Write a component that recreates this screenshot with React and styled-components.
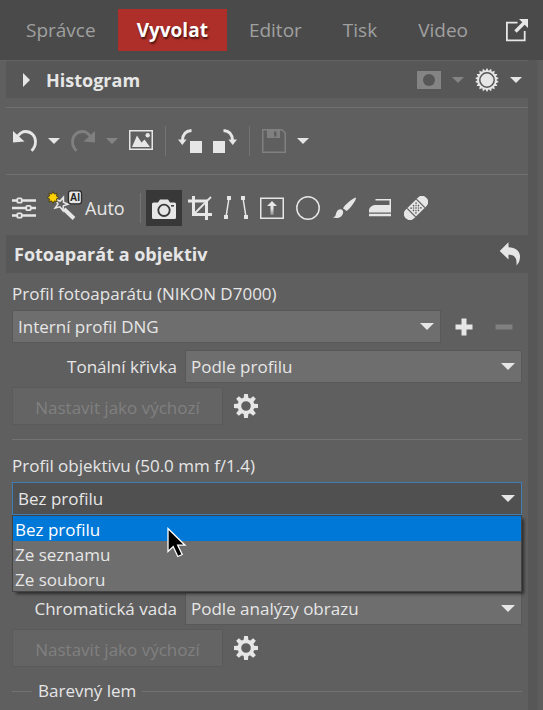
import React from "react";
import styled, { createGlobalStyle } from "styled-components";

const ink = "#e6e6e6";
const faint = "#848484";
const panel = "#5f5f5f";

const GlobalStyle = createGlobalStyle`
  * { box-sizing: border-box; }
  body {
    margin: 0;
    background: ${panel};
    color: ${ink};
    font-family: "Open Sans", "Noto Sans", sans-serif;
    font-size: 17px;
    line-height: 24px;
  }
  button, select { font: inherit; color: inherit; }
  button { border: 0; padding: 0; background: none; }
  svg { display: block; flex: none; }
`;

const Page = styled.div`
  position: relative;
  min-height: 100vh;
  display: flex;
  flex-direction: column;
`;

const TopBar = styled.header`
  height: 60px;
  padding: 0 14px 0 7px;
  display: flex;
  align-items: center;
  justify-content: space-between;
  background: #4a4a4a;
`;

const Tabs = styled.nav`
  display: flex;
  gap: 3px;
`;

const Tab = styled.button`
  height: 42px;
  padding: 0 19px;
  font-size: 19px;
  font-weight: ${(p) => (p.$active ? 700 : 400)};
  color: ${(p) => (p.$active ? "#fff" : "#a0a0a0")};
  background: ${(p) => (p.$active ? "#ae2f29" : "transparent")};
  text-shadow: ${(p) => (p.$active ? "1px 2px 2px rgba(0,0,0,.6)" : "none")};
`;

const Columns = styled.div`
  flex: 1;
  display: grid;
  grid-template-columns: minmax(0, 1fr) 15px;
`;

const Panel = styled.main`
  padding-left: 6px;
  border-top: 1px solid #646464;
`;

const ScrollTrack = styled.div`
  background: linear-gradient(90deg, #575757 0 8px, #5d5d5d 11px);
`;

const SectionBar = styled.section`
  height: ${(p) => p.$height}px;
  display: flex;
  align-items: center;
  gap: 11px;
  padding: 0 6px 0 ${(p) => p.$indent}px;
  background: #575757;
`;

const Title = styled.h2`
  flex: 1;
  margin: 0;
  font-size: 18px;
  line-height: 24px;
  font-weight: 700;
`;

const Disclosure = styled.button`
  width: 18px;
  height: 24px;
  display: grid;
  place-items: center;
`;

const Toolbar = styled.div`
  height: 67px;
  padding-left: 7px;
  display: flex;
  align-items: center;
  gap: 11px;
  border-top: 1px solid #707070;
`;

const ToolbarTop = styled(Toolbar)`
  margin-top: 9px;
`;

const ModeBar = styled(Toolbar)`
  height: 61px;
  padding: 5px 0 0;
  gap: 0;
`;

const IconButton = styled.button`
  display: grid;
  place-items: center;
  color: ${(p) => (p.disabled ? "#808080" : ink)};
`;

const ModeButton = styled(IconButton)`
  width: 36px;
  height: 36px;
  background: ${(p) => (p.$active ? "#383838" : "transparent")};
`;

const AutoButton = styled.button`
  display: flex;
  align-items: center;
  gap: 2px;
  margin: 0 14px 0 5px;
  font-size: 18px;
`;

const Divider = styled.span`
  width: 1px;
  height: 30px;
  margin: 0 ${(p) => p.$after || 1}px 0 1px;
  background: #737373;
`;

const Form = styled.div`
  padding: 0 6px;
`;

const FieldLabel = styled.label`
  display: block;
  padding-top: ${(p) => p.$top}px;
  height: ${(p) => p.$top + 28}px;
`;

const Row = styled.div`
  display: flex;
  align-items: center;
  gap: 11px;
  margin-bottom: ${(p) => p.$bottom}px;
`;

const ProfileActions = styled.div`
  display: flex;
  gap: 16px;
  padding-right: 6px;
`;

const CurveRow = styled.div`
  display: grid;
  grid-template-columns: 165px minmax(0, 1fr);
  gap: 8px;
  align-items: center;
  margin-bottom: 4px;
  & > label { text-align: right; }
`;

const SelectBox = styled.span`
  flex: 1;
  display: grid;
  align-items: center;
  & > * { grid-area: 1 / 1; }
  & > svg { justify-self: end; margin-right: 7px; pointer-events: none; }
`;

const Select = styled.select`
  appearance: none;
  width: 100%;
  height: 33px;
  padding: 0 24px 0 5px;
  border: 1px solid ${(p) => (p.$open ? "#3f7db5" : "#585858")};
  border-radius: 0;
  outline: 0;
  background: ${(p) => (p.$open ? "#505050" : "#6e6e6e")};
`;

const Options = styled.ul`
  position: relative;
  margin: 0;
  padding: 0;
  list-style: none;
  border: 1px solid #434343;
  background: #6e6e6e;
  box-shadow: 3px 3px 3px -1px rgba(0, 0, 0, 0.55);
`;

const Option = styled.li`
  height: 25px;
  line-height: 27px;
  padding-left: 2px;
  background: ${(p) => (p.$active ? "#0078d7" : "transparent")};
  color: ${(p) => (p.$active ? "#fff" : ink)};
`;

const DefaultButton = styled.button`
  width: 211px;
  height: 38px;
  padding-top: 4px;
  border: 1px solid #5a5a5a;
  background: #646464;
  color: #808080;
`;

const Rule = styled.hr`
  width: 100%;
  height: 1px;
  margin: 0;
  border: 0;
  background: #737373;
`;

const Legend = styled.div`
  display: grid;
  grid-template-columns: 20px auto 1fr;
  gap: 6px;
  align-items: center;
  padding-top: 4px;
`;

const Pointer = styled.svg`
  position: absolute;
  left: 167px;
  top: 527px;
`;

function Icon({ w = 24, h = 24, children }) {
  return (
    <svg width={w} height={h} viewBox={`0 0 ${w} ${h}`} fill="none" stroke="currentColor" strokeWidth="1.5" aria-hidden="true">
      {children}
    </svg>
  );
}

function Caret({ w = 12, h = 6, color = "currentColor" }) {
  return (
    <svg width={w} height={h} viewBox="0 0 12 6" preserveAspectRatio="none" aria-hidden="true">
      <path d="M0 0H12L6 6Z" fill={color} />
    </svg>
  );
}

function star(cx, cy, teeth, outer, inner) {
  const points = [];
  for (let i = 0; i < teeth * 2; i += 1) {
    const r = i % 2 ? inner : outer;
    const a = (i * Math.PI) / teeth - Math.PI / 2;
    points.push(`${(cx + r * Math.cos(a)).toFixed(2)},${(cy + r * Math.sin(a)).toFixed(2)}`);
  }
  return points.join(" ");
}

const UndoShape = () => (
  <>
    <path d="M4.5 7.5C7 4 9.500 2.500 12.500 2.500C18.500 2.500 22.500 7 22.500 12.500C22.500 16.500 21 19.500 18.500 21.700" strokeWidth="2.800" />
    <path d="M0 2L0 13.500L11.500 12.500Z" fill="currentColor" stroke="none" />
  </>
);

const RotateShape = () => (
  <>
    <path d="M12 12H24V24H12Z" fill="currentColor" stroke="none" />
    <path d="M13.500 1.500C8 1.800 4.500 5.500 4.300 12" strokeWidth="2.800" />
    <path d="M0 10.500H8.600L4.300 16Z" fill="currentColor" stroke="none" />
  </>
);

const Mirror = ({ children }) => <g transform="matrix(-1 0 0 1 24 0)">{children}</g>;

const Gear = () => (
  <Icon>
    {[0, 45, 90, 135, 180, 225, 270, 315].map((a) => (
      <path key={a} d="M9.500 5.500L10.100 0H13.900L14.500 5.500Z" fill="currentColor" stroke="none" transform={`rotate(${a} 12 12)`} />
    ))}
    <circle cx="12" cy="12" r="6.600" strokeWidth="3.600" />
  </Icon>
);

const modes = [
  {
    label: "Fotoaparát a objektiv",
    active: true,
    art: (
      <>
        <path d="M1.500 6.500H6L8 3.500H16L18 6.500H22.500Q24 6.500 24 8V21.500Q24 23 22.500 23H1.500Q0 23 0 21.500V8Q0 6.500 1.500 6.500Z" fill="currentColor" stroke="none" />
        <circle cx="12" cy="14.300" r="5.700" stroke="#383838" strokeWidth="1.800" />
        <path d="M19 9.800H22" stroke="#383838" />
      </>
    ),
  },
  {
    label: "Oříznout",
    art: (
      <>
        <path d="M5.500 0V18.500H24M0 5H18.500V24" strokeWidth="3" />
        <path d="M6 18L23 1" strokeWidth="1.800" />
      </>
    ),
  },
  {
    label: "Perspektiva",
    art: (
      <>
        <path d="M5 2L2 21M19 2L22 21" />
        <path d="M3 0H7V4H3ZM0 19H4V23H0ZM17 0H21V4H17ZM20 19H24V23H20Z" fill="currentColor" stroke="none" />
      </>
    ),
  },
  {
    label: "Přechodový filtr",
    art: (
      <>
        <defs>
          <linearGradient id="arrowFade" x1="0" y1="5" x2="0" y2="20" gradientUnits="userSpaceOnUse">
            <stop offset=".5" stopColor={ink} />
            <stop offset="1" stopColor={ink} stopOpacity=".2" />
          </linearGradient>
        </defs>
        <path d="M.75 2.250H23.250V22.250H.75Z" />
        <path d="M12 5L17 10H13.500V19H10.500V10H7Z" fill="url(#arrowFade)" stroke="none" />
      </>
    ),
  },
  { label: "Kruhový filtr", art: <circle cx="12" cy="12" r="11.200" /> },
  {
    label: "Štětec",
    art: (
      <g fill="currentColor" stroke="none">
        <path d="M24 1.500C24.200 4.500 18 13 14.500 15L11 12.200C13 8.500 20.500 2.500 24 1.500Z" />
        <path d="M9.500 13.500C11.500 14.500 12 17.500 9.500 20C7.500 22.200 4 22.500 .8 21.300C3.500 20.800 3.500 19.500 4.200 17C5 14 7.500 12.700 9.500 13.500Z" />
      </g>
    ),
  },
  {
    label: "Žehlička",
    art: (
      <g fill="currentColor" stroke="none">
        <path d="M7.500 3H23V16.500H1V14.500C1 11 4.500 9 8.500 9H21.500V4.500H7.500ZM1 17.800H23V20.200H1Z" />
      </g>
    ),
  },
  {
    label: "Retušovat",
    art: (
      <g transform="rotate(-45 12 12)">
        <rect x="-2.500" y="6" width="29" height="12" rx="5.500" fill="currentColor" stroke="none" />
        <path d="M5.500 6V18M18.500 6V18" stroke={panel} strokeWidth="1.300" />
        <g fill={panel} stroke="none">
          {[8.500, 12, 15.500].map((x) => [8.600, 12, 15.400].map((y) => <circle key={`${x}-${y}`} cx={x} cy={y} r=".85" />))}
          {[10.250, 13.750].map((x) => [10.300, 13.700].map((y) => <circle key={`${x}-${y}`} cx={x} cy={y} r=".75" />))}
        </g>
      </g>
    ),
  },
];

function Picker({ id, value, open, options = [value] }) {
  return (
    <SelectBox>
      <Select id={id} defaultValue={value} $open={open}>
        {options.map((o) => (
          <option key={o}>{o}</option>
        ))}
      </Select>
      <Caret w={14} h={7} color={ink} />
    </SelectBox>
  );
}

const DefaultRow = ({ bottom }) => (
  <Row $bottom={bottom}>
    <DefaultButton disabled>Nastavit jako výchozí</DefaultButton>
    <IconButton aria-label="Možnosti">
      <Gear />
    </IconButton>
  </Row>
);

const lensOptions = ["Bez profilu", "Ze seznamu", "Ze souboru"];

export default function App() {
  return (
    <Page>
      <GlobalStyle />
      <TopBar>
        <Tabs>
          {["Správce", "Vyvolat", "Editor", "Tisk", "Video"].map((t) => (
            <Tab key={t} $active={t === "Vyvolat"}>
              {t}
            </Tab>
          ))}
        </Tabs>
        <IconButton aria-label="Nové okno">
          <Icon>
            <path d="M12.500 4.700H1.900V22.300H19.700V13" strokeWidth="1.800" />
            <path d="M10.500 13.500L19 5" strokeWidth="3.400" />
            <path d="M14 1H23V10Z" fill="currentColor" stroke="none" />
          </Icon>
        </IconButton>
      </TopBar>
      <Columns>
        <Panel>
          <SectionBar $height={37} $indent={11}>
            <Disclosure aria-label="Rozbalit histogram">
              <svg width="7" height="14" viewBox="0 0 7 14">
                <path d="M0 0L7 7L0 14Z" fill={ink} />
              </svg>
            </Disclosure>
            <Title>Histogram</Title>
            <IconButton disabled aria-label="Maska">
              <Icon h={18}>
                <path d="M0 0H24V18H0Z" fill={faint} stroke="none" />
                <circle cx="12" cy="9" r="6" fill="#575757" stroke="none" />
              </Icon>
            </IconButton>
            <Caret color={faint} />
            <IconButton aria-label="Expozice">
              <Icon>
                <polygon points={star(12, 12, 18, 12, 9.500)} fill="currentColor" stroke="none" />
                <circle cx="12" cy="12" r="7.200" stroke="#575757" strokeWidth="1.500" />
              </Icon>
            </IconButton>
            <Caret />
          </SectionBar>
          <ToolbarTop>
            <IconButton aria-label="Zpět">
              <Icon><UndoShape /></Icon>
            </IconButton>
            <Caret />
            <IconButton disabled aria-label="Znovu">
              <Icon><Mirror><UndoShape /></Mirror></Icon>
            </IconButton>
            <Caret color={faint} />
            <IconButton aria-label="Náhled">
              <Icon>
                <path d="M.75 1.750H23.250V20.250H.75Z" />
                <path d="M3 18L8 6.500L12.500 13.500L15.500 10.500L21 18Z" fill="currentColor" stroke="none" />
                <circle cx="18.700" cy="6.300" r="2.200" fill="currentColor" stroke="none" />
              </Icon>
            </IconButton>
            <Divider />
            <IconButton aria-label="Otočit vlevo">
              <Icon><RotateShape /></Icon>
            </IconButton>
            <IconButton aria-label="Otočit vpravo">
              <Icon><Mirror><RotateShape /></Mirror></Icon>
            </IconButton>
            <Divider />
            <IconButton disabled aria-label="Uložit">
              <Icon>
                <path d="M.75 .75H20L23.250 4V23.250H.75Z" />
                <path d="M5 1H18V9H5ZM12 2.500V7.500H14.500V2.500Z" fill="currentColor" fillRule="evenodd" stroke="none" />
              </Icon>
            </IconButton>
            <Caret />
          </ToolbarTop>
          <ModeBar>
            <ModeButton aria-label="Úpravy">
              <Icon>
                <path d="M0 4.500H24M0 12H24M0 19.500H24" strokeWidth="2.400" />
                <g fill={panel} strokeWidth="1.800">
                  <rect x="5.300" y="2.300" width="4.400" height="4.400" rx="1" />
                  <rect x="14.300" y="9.800" width="4.400" height="4.400" rx="1" />
                  <rect x="5.300" y="17.300" width="4.400" height="4.400" rx="1" />
                </g>
              </Icon>
            </ModeButton>
            <AutoButton>
              <Icon w={36} h={36}>
                <path d="M17 19L27 28.500" strokeWidth="4" />
                <polygon points={star(14, 14, 5, 7, 3)} fill={panel} strokeWidth="1.600" transform="rotate(20 14 14)" />
                <polygon points={star(6, 7.500, 8, 6, 3.700)} fill="#ffd000" stroke="#4c4318" strokeWidth="1" />
                <rect x="21.500" y=".8" width="13" height="13" rx="2.500" fill={ink} stroke="#2c2c2c" strokeWidth="1.300" />
                <text x="28" y="11" textAnchor="middle" fontFamily="Liberation Sans, sans-serif" fontWeight="700" fontSize="10" fill="#222" stroke="none">AI</text>
              </Icon>
              Auto
            </AutoButton>
            <Divider $after={5} />
            {modes.map((m) => (
              <ModeButton key={m.label} aria-label={m.label} $active={m.active}>
                <Icon>{m.art}</Icon>
              </ModeButton>
            ))}
          </ModeBar>
          <SectionBar $height={38} $indent={8}>
            <Title>Fotoaparát a objektiv</Title>
            <IconButton aria-label="Obnovit">
              <Icon>
                <path d="M1.700 9L10.500 .3V5.200C17.500 5.500 22 9 22 14.500C22 18 21 21 18.500 23.500C19 16.500 17.500 13 10.500 12.800V17.500Z" fill="currentColor" stroke="none" />
              </Icon>
            </IconButton>
          </SectionBar>
          <Form>
            <FieldLabel htmlFor="camera" $top={9}>Profil fotoaparátu (NIKON D7000)</FieldLabel>
            <Row $bottom={7}>
              <Picker id="camera" value="Interní profil DNG" />
              <ProfileActions>
                <IconButton aria-label="Přidat profil">
                  <Icon><path d="M12 3.500V20.500M3.500 12H20.500" strokeWidth="5" /></Icon>
                </IconButton>
                <IconButton disabled aria-label="Odebrat profil">
                  <Icon><path d="M3.500 12H20.500" strokeWidth="5" /></Icon>
                </IconButton>
              </ProfileActions>
            </Row>
            <CurveRow>
              <label htmlFor="curve">Tonální křivka</label>
              <Picker id="curve" value="Podle profilu" />
            </CurveRow>
            <DefaultRow bottom={14} />
            <Rule />
            <FieldLabel htmlFor="lens" $top={14}>Profil objektivu (50.0 mm f/1.4)</FieldLabel>
            <Picker id="lens" value="Bez profilu" options={lensOptions} open />
            <Options role="listbox" aria-label="Profil objektivu">
              {lensOptions.map((o, i) => (
                <Option key={o} role="option" aria-selected={i === 0} $active={i === 0}>
                  {o}
                </Option>
              ))}
            </Options>
            <CurveRow>
              <label htmlFor="aberration">Chromatická vada</label>
              <Picker id="aberration" value="Podle analýzy obrazu" />
            </CurveRow>
            <DefaultRow bottom={8} />
            <Legend>
              <Rule />
              <span>Barevný lem</span>
              <Rule />
            </Legend>
          </Form>
        </Panel>
        <ScrollTrack />
      </Columns>
      <Pointer width="20" height="32" viewBox="0 0 20 32" aria-hidden="true">
        <path d="M1 1.500V24.500L6.200 19.600L10.800 29.500L15.200 27.500L10.700 18.200H18Z" fill="#000" stroke="#fff" strokeWidth="1.300" />
      </Pointer>
    </Page>
  );
}
